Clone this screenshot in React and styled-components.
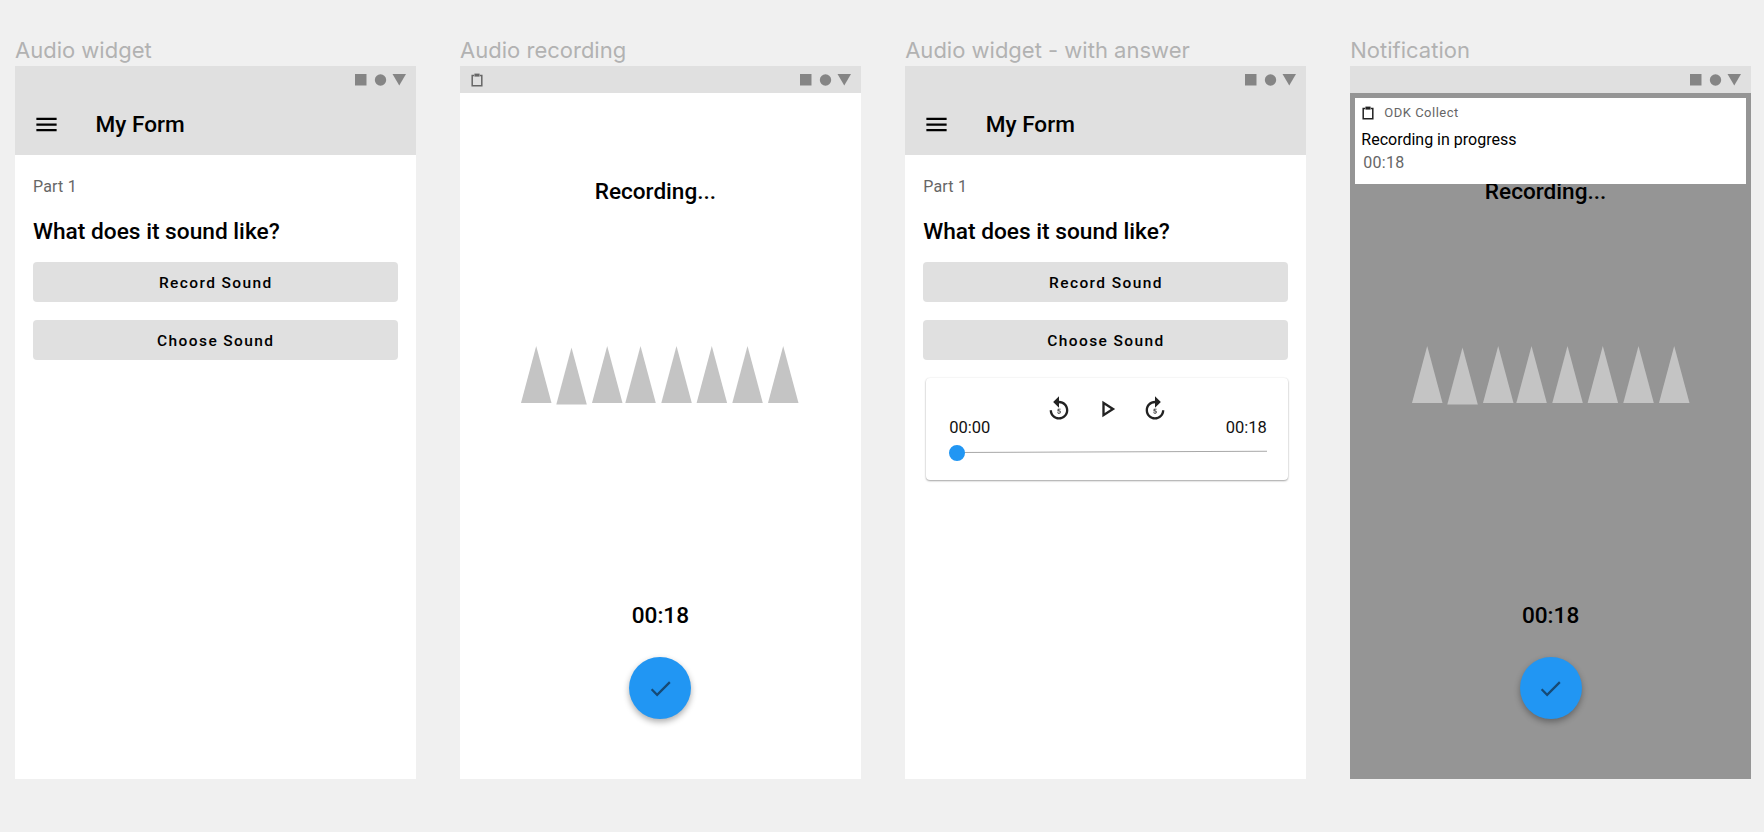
import React from 'react';
import styled, { createGlobalStyle } from 'styled-components';
import { MdCheck, MdMenu, MdOutlinePlayArrow, MdReplay5, MdForward5 } from 'react-icons/md';

const GlobalStyle = createGlobalStyle`
  html, body {
    margin: 0;
    padding: 0;
    background: #f0f0f0;
    font-family: Roboto, "Liberation Sans", sans-serif;
  }
`;

const Board = styled.div`
  width: 1764px;
  height: 832px;
  box-sizing: border-box;
  padding: 36px 0 0 15px;
  display: flex;
  gap: 44.5px;
  overflow: hidden;
`;

const Frame = styled.section`
  width: 400.6px;
  display: flex;
  flex-direction: column;
`;

const FrameTitle = styled.h2`
  margin: 0;
  height: 30px;
  font: 400 22px/28px Inter, sans-serif;
  color: #b2b2b2;
`;

const Phone = styled.div`
  position: relative;
  height: 713px;
  background: ${(p) => (p.$dimmed ? '#959595' : '#fff')};
  display: flex;
  flex-direction: column;
`;

const StatusBar = styled.div`
  flex: none;
  height: 27px;
  background: #e0e0e0;
  display: flex;
  align-items: center;
  justify-content: space-between;
  box-sizing: border-box;
  padding: 0 10px 0 11px;
`;

const AppBar = styled.header`
  flex: none;
  height: 62px;
  background: #e0e0e0;
  display: flex;
  align-items: center;
  padding: 1px 0 0 18px;
  box-sizing: border-box;
  color: #000;
`;

const MenuIcon = styled(MdMenu)`
  font-size: 27px;
  flex: none;
`;

const AppTitle = styled.h1`
  margin: 0 0 0 35.5px;
  font: 470 22.6px/28px Roboto, sans-serif;
  color: #000;
`;

const FormBody = styled.div`
  display: flex;
  flex-direction: column;
  padding: 22px 18px 0;
`;

const PartLabel = styled.div`
  font: 400 16px/20px Roboto, sans-serif;
  letter-spacing: 0.2px;
  color: #666;
`;

const Question = styled.div`
  margin-top: 20px;
  font: 470 22.7px/29px Roboto, sans-serif;
  color: #000;
`;

const ActionButton = styled.div`
  height: 40px;
  margin-top: ${(p) => p.$top}px;
  padding: 1px 0 0 1px;
  box-sizing: border-box;
  border-radius: 4px;
  background: #e0e0e0;
  display: flex;
  align-items: center;
  justify-content: center;
  font: 470 15.5px/20px Roboto, sans-serif;
  letter-spacing: 1.4px;
  color: #000;
`;

const PlayerCard = styled.div`
  margin: 18px 0 0 3px;
  height: 102px;
  box-sizing: border-box;
  padding: 15px 21px 0 23px;
  border-radius: 4px;
  background: #fff;
  box-shadow: 0 1px 2px rgba(0, 0, 0, 0.35), 0 0 2px rgba(0, 0, 0, 0.08);
`;

const PlayerControls = styled.div`
  height: 32px;
  margin-left: -2px;
  display: flex;
  justify-content: center;
  align-items: center;
  gap: 20px;
  color: #222;
  font-size: 28px;
`;

const TimeRow = styled.div`
  margin-top: -7px;
  display: flex;
  justify-content: space-between;
  font: 400 16.5px/20px Roboto, sans-serif;
  color: #111;
`;

const SliderTrack = styled.div`
  position: relative;
  margin: 14px 0 0 8px;
  height: 1px;
  background: #a8a8a8;
  transform: rotate(-0.25deg);
  transform-origin: left center;
`;

const SliderThumb = styled.div`
  position: absolute;
  left: -8px;
  top: -7px;
  width: 16px;
  height: 16px;
  border-radius: 50%;
  background: #2196f3;
`;

const RecorderBody = styled.div`
  flex: 1;
  display: flex;
  flex-direction: column;
  align-items: center;
`;

const RecordingLabel = styled.div`
  margin: 84.5px 10px 0 0;
  font: 470 22.6px/28px Roboto, sans-serif;
  color: #000;
`;

const Wave = styled.svg`
  margin: 140px 0 0 2px;
  display: block;
`;

const Elapsed = styled.div`
  margin-top: 196px;
  font: 470 22.6px/28px Roboto, sans-serif;
  color: #000;
`;

const Fab = styled.div`
  margin-top: 27.5px;
  width: 62px;
  height: 62px;
  border-radius: 50%;
  background: #2196f3;
  display: flex;
  align-items: center;
  justify-content: center;
  font-size: 27px;
  color: #174a75;
  box-shadow: 0 3px 6px rgba(0, 0, 0, 0.32);
`;

const NotificationCard = styled.div`
  position: absolute;
  top: 32px;
  left: 5px;
  right: 5px;
  height: 86px;
  box-sizing: border-box;
  padding: 5px 0 0 6px;
  background: #fff;
`;

const NotificationHead = styled.div`
  display: flex;
  align-items: center;
  gap: 10px;
  padding-left: 1px;
  font: 400 13px/20px Roboto, sans-serif;
  letter-spacing: 0.5px;
  color: #666;
`;

const NotificationTitle = styled.div`
  margin-top: 7px;
  font: 400 16px/20px Roboto, sans-serif;
  color: #000;
`;

const NotificationTime = styled.div`
  margin: 3px 0 0 2px;
  font: 400 16px/20px Roboto, sans-serif;
  letter-spacing: 0.3px;
  color: #666;
`;

const TRIANGLES = [0, 35.3, 71, 104.3, 140.3, 175.6, 211.3, 247];

function StatusIcons() {
  return (
    <svg width="51" height="14" viewBox="0 0 51 14" style={{ marginLeft: 'auto' }}>
      <rect x="0" y="1" width="11.5" height="11.5" fill="#858585" />
      <circle cx="25.5" cy="7" r="5.7" fill="#858585" />
      <path d="M37.5 1h13.5l-6.75 11.5z" fill="#858585" />
    </svg>
  );
}

function ClipboardIcon({ color }) {
  return (
    <svg width="12" height="14" viewBox="0 0 12 14" fill="none">
      <path d="M3 2.5H1.2v10.3h9.6V2.5H9" stroke={color} strokeWidth="1.5" />
      <rect x="3.4" y="0.6" width="5.2" height="3" fill={color} />
    </svg>
  );
}

function WaveForm() {
  return (
    <Wave width="280" height="60" viewBox="0 0 280 60">
      {TRIANGLES.map((x, i) => {
        const dy = i === 1 ? 1.5 : 0;
        return (
          <polygon
            key={x}
            points={`${x},${57 + dy} ${x + 15.2},${dy} ${x + 30.5},${57 + dy}`}
            fill="#c4c4c4"
          />
        );
      })}
    </Wave>
  );
}

function FormPhone({ children }) {
  return (
    <Phone>
      <StatusBar>
        <StatusIcons />
      </StatusBar>
      <AppBar>
        <MenuIcon />
        <AppTitle>My Form</AppTitle>
      </AppBar>
      <FormBody>
        <PartLabel>Part 1</PartLabel>
        <Question>What does it sound like?</Question>
        <ActionButton $top={16}>Record Sound</ActionButton>
        <ActionButton $top={18}>Choose Sound</ActionButton>
        {children}
      </FormBody>
    </Phone>
  );
}

function RecorderPhone({ showClipboard, dimmed, children }) {
  return (
    <Phone $dimmed={dimmed}>
      <StatusBar>
        {showClipboard && <ClipboardIcon color="#666" />}
        <StatusIcons />
      </StatusBar>
      <RecorderBody>
        <RecordingLabel>Recording...</RecordingLabel>
        <WaveForm />
        <Elapsed>00:18</Elapsed>
        <Fab>
          <MdCheck />
        </Fab>
      </RecorderBody>
      {children}
    </Phone>
  );
}

export default function App() {
  return (
    <>
      <GlobalStyle />
      <Board>
        <Frame>
          <FrameTitle>Audio widget</FrameTitle>
          <FormPhone />
        </Frame>
        <Frame>
          <FrameTitle>Audio recording</FrameTitle>
          <RecorderPhone showClipboard />
        </Frame>
        <Frame>
          <FrameTitle>Audio widget - with answer</FrameTitle>
          <FormPhone>
            <PlayerCard>
              <PlayerControls>
                <MdReplay5 />
                <MdOutlinePlayArrow />
                <MdForward5 />
              </PlayerControls>
              <TimeRow>
                <span>00:00</span>
                <span>00:18</span>
              </TimeRow>
              <SliderTrack>
                <SliderThumb />
              </SliderTrack>
            </PlayerCard>
          </FormPhone>
        </Frame>
        <Frame>
          <FrameTitle>Notification</FrameTitle>
          <RecorderPhone dimmed>
            <NotificationCard>
              <NotificationHead>
                <ClipboardIcon color="#222" />
                ODK Collect
              </NotificationHead>
              <NotificationTitle>Recording in progress</NotificationTitle>
              <NotificationTime>00:18</NotificationTime>
            </NotificationCard>
          </RecorderPhone>
        </Frame>
      </Board>
    </>
  );
}
